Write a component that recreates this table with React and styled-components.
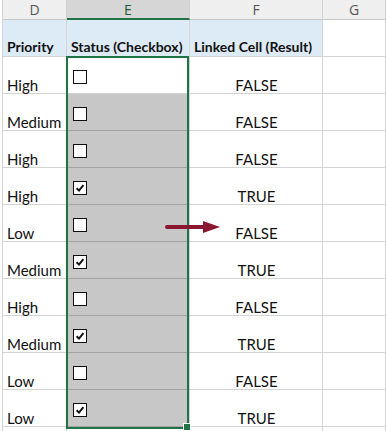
import styled, { createGlobalStyle } from 'styled-components';

const GlobalStyle = createGlobalStyle`
  html, body {
    margin: 0;
    background: #ffffff;
    overflow: hidden;
  }
`;

const GREEN = '#217346';

const rows = [
  { priority: 'High', checked: false },
  { priority: 'Medium', checked: false },
  { priority: 'High', checked: false },
  { priority: 'High', checked: true },
  { priority: 'Low', checked: false },
  { priority: 'Medium', checked: true },
  { priority: 'High', checked: false },
  { priority: 'Medium', checked: true },
  { priority: 'Low', checked: false },
  { priority: 'Low', checked: true },
];

const Sheet = styled.div`
  position: relative;
  display: grid;
  grid-template-columns: 64px 123px 133px 1fr;
  grid-template-rows: 20px 37px repeat(11, 37px);
  margin-left: 2px;
  border-left: 1px solid #d4d4d4;
  width: 383px;
  height: 431px;
  overflow: hidden;
  font-family: Lato, 'Open Sans', sans-serif;
  font-size: 15px;
  color: #111;
`;

const ColHeader = styled.div`
  box-sizing: border-box;
  display: flex;
  align-items: center;
  justify-content: center;
  background: ${(p) => (p.$active ? '#d6d6d6' : '#efefef')};
  border-right: 1px solid #d0d0d0;
  border-bottom: ${(p) => (p.$active ? `2px solid ${GREEN}` : '1px solid #c8c8c8')};
  color: ${(p) => (p.$active ? '#1f5a38' : '#555')};
  font-family: 'Open Sans', sans-serif;
  font-size: 14px;
`;

const fills = {
  white: '#ffffff',
  blue: '#ddebf7',
  gray: '#c7c7c7',
};

const Cell = styled.div`
  box-sizing: border-box;
  display: flex;
  align-items: ${(p) => (p.$top ? 'flex-start' : 'flex-end')};
  justify-content: ${(p) => (p.$center ? 'center' : 'flex-start')};
  padding: ${(p) => (p.$top ? '13px 0 0 6px' : '0 3px 0 4px')};
  line-height: ${(p) => (p.$bold ? '18px' : '15px')};
  background: ${(p) => fills[p.$fill || 'white']};
  border-right: 1px solid #d4d4d4;
  border-bottom: 1px solid ${(p) => (p.$fill === 'gray' ? '#a2a2a2' : '#d4d4d4')};
  font-weight: ${(p) => (p.$bold ? 700 : 400)};
  font-size: ${(p) => (p.$bold ? '14px' : '15px')};
  white-space: nowrap;
`;

const Box = styled.span`
  box-sizing: border-box;
  display: flex;
  align-items: center;
  justify-content: center;
  width: 14px;
  height: 14px;
  background: #fff;
  border: 1.3px solid #111;
`;

const Selection = styled.div`
  position: absolute;
  left: 63px;
  top: 56px;
  width: 123px;
  height: 373px;
  box-sizing: border-box;
  border: 2px solid ${GREEN};
  pointer-events: none;
`;

const FillHandle = styled.div`
  position: absolute;
  right: -4px;
  bottom: -4px;
  width: 6px;
  height: 6px;
  background: ${GREEN};
  border: 1px solid #fff;
`;

const Arrow = styled.svg`
  position: absolute;
  left: 160px;
  top: 218px;
  pointer-events: none;
`;

const Checkbox = ({ checked }) => (
  <Box>
    {checked && (
      <svg width="10" height="10" viewBox="0 0 10 10">
        <path d="M1.6 5.2 L4 7.6 L8.4 2.2" fill="none" stroke="#111" strokeWidth="2" />
      </svg>
    )}
  </Box>
);

const Row = ({ priority, checked, first }) => (
  <>
    <Cell>{priority}</Cell>
    <Cell $top $fill={first ? 'white' : 'gray'}>
      <Checkbox checked={checked} />
    </Cell>
    <Cell $center>{checked ? 'TRUE' : 'FALSE'}</Cell>
    <Cell />
  </>
);

export default function App() {
  return (
    <>
      <GlobalStyle />
      <Sheet>
        <ColHeader>D</ColHeader>
        <ColHeader $active>E</ColHeader>
        <ColHeader>F</ColHeader>
        <ColHeader>G</ColHeader>

        <Cell $fill="blue" $bold>Priority</Cell>
        <Cell $fill="blue" $bold>Status (Checkbox)</Cell>
        <Cell $fill="blue" $bold>Linked Cell (Result)</Cell>
        <Cell />

        {rows.map((row, i) => (
          <Row key={i} {...row} first={i === 0} />
        ))}

        <Cell />
        <Cell />
        <Cell />
        <Cell />

        <Selection>
          <FillHandle />
        </Selection>
        <Arrow width="62" height="18" viewBox="0 0 62 18">
          <path d="M4 9 H44" stroke="#8a1630" strokeWidth="4" strokeLinecap="round" />
          <path d="M40 3 L57 9 L40 15 Z" fill="#8a1630" />
        </Arrow>
      </Sheet>
    </>
  );
}
